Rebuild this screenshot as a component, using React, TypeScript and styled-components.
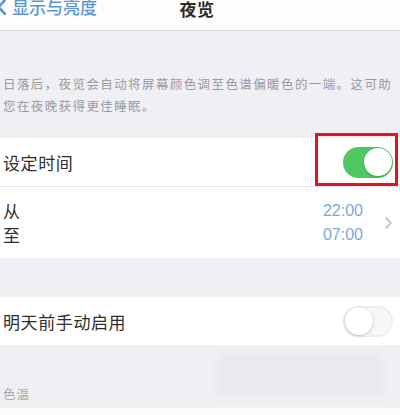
import React from "react";
import styled, { createGlobalStyle } from "styled-components";

const Global = createGlobalStyle`
  html, body { margin: 0; padding: 0; background: #efeff4; }
  body { width: 400px; height: 415px; overflow: hidden; font-family: "Noto Sans CJK SC", "Noto Sans", sans-serif; }
`;

const Page = styled.div`
  width: 400px;
  height: 415px;
  display: flex;
  flex-direction: column;
  background: #efeff4;
  overflow: hidden;
`;

const NavBar = styled.div`
  height: 30px;
  flex: none;
  background: #fdfdfd;
  border-bottom: 1px solid #dcdce0;
  display: grid;
  grid-template-columns: 1fr auto 1fr;
  align-items: start;
`;

const Back = styled.div`
  display: flex;
  align-items: center;
  gap: 6px;
  margin-top: -5px;
  color: #5b95d6;
  font-size: 17px;
  line-height: 24px;
  font-weight: 500;
`;

const Title = styled.div`
  margin-top: -3px;
  margin-left: -6px;
  color: #2a2a2a;
  font-size: 17px;
  font-weight: 700;
  line-height: 24px;
  letter-spacing: 0.5px;
`;

const Description = styled.div`
  padding: 42px 4px 21px 3px;
  color: #9a9aa0;
  font-size: 12.5px;
  line-height: 22px;
  letter-spacing: 1.4px;
`;

const Group = styled.div`
  background: #fff;
  flex: none;
`;

const Row = styled.div<{ $h: number }>`
  position: relative;
  height: ${(p) => p.$h}px;
  display: flex;
  align-items: center;
  justify-content: space-between;
  padding: 0 7px 0 3px;
`;

const Separator = styled.div`
  height: 1px;
  background: #e3e3e7;
`;

const Label = styled.div`
  color: #2e2e2e;
  font-size: 17px;
  letter-spacing: 0.6px;
`;

const Stack = styled.div`
  display: flex;
  flex-direction: column;
  line-height: 24px;
`;

const Times = styled.div`
  display: flex;
  align-items: center;
  gap: 22px;
  padding-right: 1px;
`;

const Time = styled.div`
  color: #7ba8da;
  font-family: "Liberation Sans", "Noto Sans", sans-serif;
  font-size: 16px;
  line-height: 24px;
  text-align: right;
`;

const Chevron = styled.div`
  color: #c7c7cc;
  display: flex;
`;

const Switch = styled.div<{ $on?: boolean }>`
  position: relative;
  width: 50px;
  height: 31px;
  border-radius: 16px;
  background: ${(p) => (p.$on ? "#4fc864" : "#f7f6f8")};
  box-shadow: ${(p) => (p.$on ? "none" : "inset 0 0 0 1.5px #ececee")};
  filter: blur(0.6px);
`;

const Knob = styled.div<{ $on?: boolean }>`
  position: absolute;
  top: 1.5px;
  left: ${(p) => (p.$on ? "20.5px" : "1.5px")};
  width: 28px;
  height: 28px;
  border-radius: 50%;
  background: #fff;
  box-shadow: 0 1px 3px rgba(0, 0, 0, 0.18), 0 0 0 0.5px rgba(0, 0, 0, 0.06);
`;

const Highlight = styled.div`
  position: absolute;
  top: -5px;
  right: 2px;
  width: 83px;
  height: 53px;
  box-sizing: border-box;
  border: 3px solid #e3141b;
`;

const Gap = styled.div<{ $h: number }>`
  height: ${(p) => p.$h}px;
  flex: none;
`;

const TempSection = styled.div`
  height: 63px;
  flex: none;
  display: flex;
  align-items: flex-end;
  justify-content: space-between;
  padding: 0 17px 4px 3px;
  box-sizing: border-box;
  border-bottom: 1px solid #f4f4f6;
`;

const SmallLabel = styled.div`
  color: #a8a8ae;
  font-size: 12.5px;
  line-height: 18px;
  letter-spacing: 1px;
`;

const Blurred = styled.div`
  width: 166px;
  height: 44px;
  margin-bottom: 6px;
  background: #e9e9ee;
  border-radius: 4px;
  filter: blur(3px);
`;

const Bottom = styled.div`
  flex: 1;
  background: #fbfbfc;
`;

export default function App() {
  return (
    <Page>
      <Global />
      <NavBar>
        <Back>
          <svg width="9" height="16" viewBox="0 0 9 16" style={{ marginLeft: -3 }}>
            <path d="M8 1 L1.5 8 L8 15" fill="none" stroke="#5b95d6" strokeWidth="2.6" strokeLinecap="round" strokeLinejoin="round" />
          </svg>
          <span>显示与亮度</span>
        </Back>
        <Title>夜览</Title>
        <div />
      </NavBar>
      <Description>
        日落后，夜览会自动将屏幕颜色调至色谱偏暖色的一端。这可助
        <br />
        您在夜晚获得更佳睡眠。
      </Description>
      <Group>
        <Row $h={48}>
          <Label>设定时间</Label>
          <Switch $on>
            <Knob $on />
          </Switch>
          <Highlight />
        </Row>
        <Separator />
        <Row $h={71}>
          <Stack>
            <Label>从</Label>
            <Label>至</Label>
          </Stack>
          <Times>
            <Stack>
              <Time>22:00</Time>
              <Time>07:00</Time>
            </Stack>
            <Chevron>
              <svg width="7" height="12" viewBox="0 0 7 12">
                <path d="M1 1 L6 6 L1 11" fill="none" stroke="#c7c7cc" strokeWidth="1.8" strokeLinecap="round" strokeLinejoin="round" />
              </svg>
            </Chevron>
          </Times>
        </Row>
      </Group>
      <Gap $h={39} />
      <Group>
        <Row $h={48}>
          <Label>明天前手动启用</Label>
          <Switch>
            <Knob />
          </Switch>
        </Row>
      </Group>
      <TempSection>
        <SmallLabel>色温</SmallLabel>
        <Blurred />
      </TempSection>
      <Bottom />
    </Page>
  );
}
